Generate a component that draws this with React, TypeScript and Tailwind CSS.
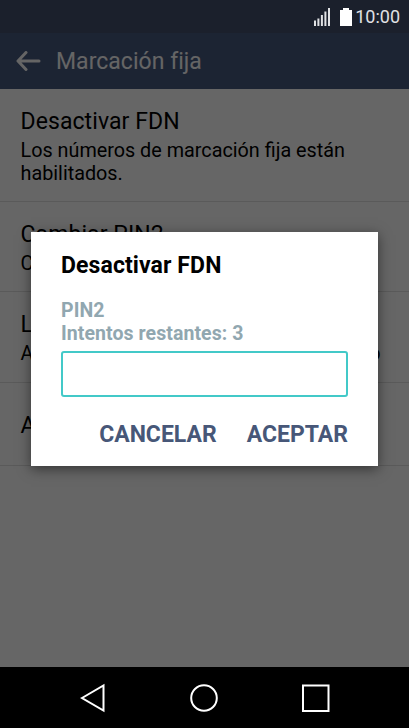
import React from 'react';

interface SettingItem {
  title: string;
  summary?: string;
  className: string;
  summaryClassName?: string;
}

const items: SettingItem[] = [
  {
    title: 'Desactivar FDN',
    summary: 'Los números de marcación fija están habilitados.',
    className: 'h-[113px] pt-[18px]',
  },
  { title: 'Cambiar PIN2', summary: 'Cambiar PIN para acceso FDN', className: 'h-[90px] pt-[18px]' },
  {
    title: 'Lista FDN',
    summary: 'Administrar lista de números de teléfono',
    className: 'h-[91px] pt-[18px]',
    summaryClassName: 'whitespace-nowrap [text-align-last:justify]',
  },
  { title: 'Acerca de', className: 'h-[83px] pt-[28px]' },
];

function StatusBar() {
  return (
    <div className="flex h-[33px] items-center justify-end bg-[#1b202c] pr-[9px] text-[#e0e1e4]">
      <svg width="17" height="18" viewBox="0 0 17 18" className="mr-[9px]" fill="currentColor">
        <rect x="0" y="12.5" width="2" height="5.5" />
        <rect x="3.4" y="10.5" width="2" height="7.5" />
        <rect x="6.9" y="7" width="2" height="11" />
        <rect x="10.4" y="3.5" width="2" height="14.5" />
        <rect x="14" y="0" width="2" height="18" />
      </svg>
      <svg width="12" height="18" viewBox="0 0 12 18" className="mr-[3px]" fill="#fff">
        <path d="M3 0h6v2h3v16H0V2h3z" />
      </svg>
      <span className="text-[18px] leading-[18px]">10:00</span>
    </div>
  );
}

function Header() {
  return (
    <header className="flex h-14 items-center bg-[#485a80] pl-[15px] text-[#fcfcfc]">
      <svg width="26" height="20" viewBox="0 0 26 20" fill="none" stroke="currentColor" strokeWidth="3" strokeLinecap="round" strokeLinejoin="round">
        <path d="M11 1.500 3 10l8 8.500M3.500 10H24" />
      </svg>
      <h1 className="mt-px ml-[15px] text-[23px] leading-7 tracking-[0.03px]">Marcación fija</h1>
    </header>
  );
}

function SettingsList() {
  return (
    <ul className="flex-1 bg-white text-black">
      {items.map((item) => (
        <li key={item.title} className={`border-b border-[#e0e0e0] pl-[20.500px] ${item.className}`}>
          <div className="text-[23px] leading-[30px] tracking-[0.08px]">{item.title}</div>
          {item.summary && (
            <div className={`mt-[2px] w-[360px] text-[19.800px] leading-[23px] ${item.summaryClassName ?? ''}`}>
              {item.summary}
            </div>
          )}
        </li>
      ))}
    </ul>
  );
}

function PinDialog() {
  return (
    <div className="h-[234px] w-[347px] bg-white px-[30px] pt-[19px] font-bold shadow-[0_3px_12px_rgba(0,0,0,0.5)]">
      <h2 className="text-[23px] leading-[30px] tracking-[0.1px] text-black">Desactivar FDN</h2>
      <div className="mt-[18px] text-[19.500px] leading-[23px] tracking-[0.07px] text-[#91a7b0]">
        <p>PIN2</p>
        <p>Intentos restantes: 3</p>
      </div>
      <input
        type="password"
        className="mt-[6px] block h-[46px] w-[287px] rounded-[3px] border-2 border-[#43c9c8] bg-white px-2 outline-none"
      />
      <div className="mt-[23px] flex justify-end gap-[30px] text-[23px] leading-[30px] text-[#475778]">
        <button>CANCELAR</button>
        <button>ACEPTAR</button>
      </div>
    </div>
  );
}

function NavBar() {
  return (
    <nav className="flex h-[61px] items-center bg-black pl-20">
      <svg width="250" height="30" viewBox="0 0 250 30" fill="none" stroke="#fff" strokeWidth="2">
        <path d="M2 15 23.500 2.500v25z" />
        <circle cx="124" cy="15" r="12.800" />
        <rect x="223" y="2.500" width="25.500" height="25.500" />
      </svg>
    </nav>
  );
}

export default function App() {
  return (
    <div className="flex h-[728px] w-[409px] flex-col overflow-hidden font-[Roboto,sans-serif]">
      <StatusBar />
      <div className="relative flex flex-1 flex-col overflow-hidden">
        <Header />
        <SettingsList />
        {/* Modal backdrop */}
        <div className="absolute inset-0 bg-black/60 pt-[199px] pl-[31px]">
          <PinDialog />
        </div>
      </div>
      <NavBar />
    </div>
  );
}
